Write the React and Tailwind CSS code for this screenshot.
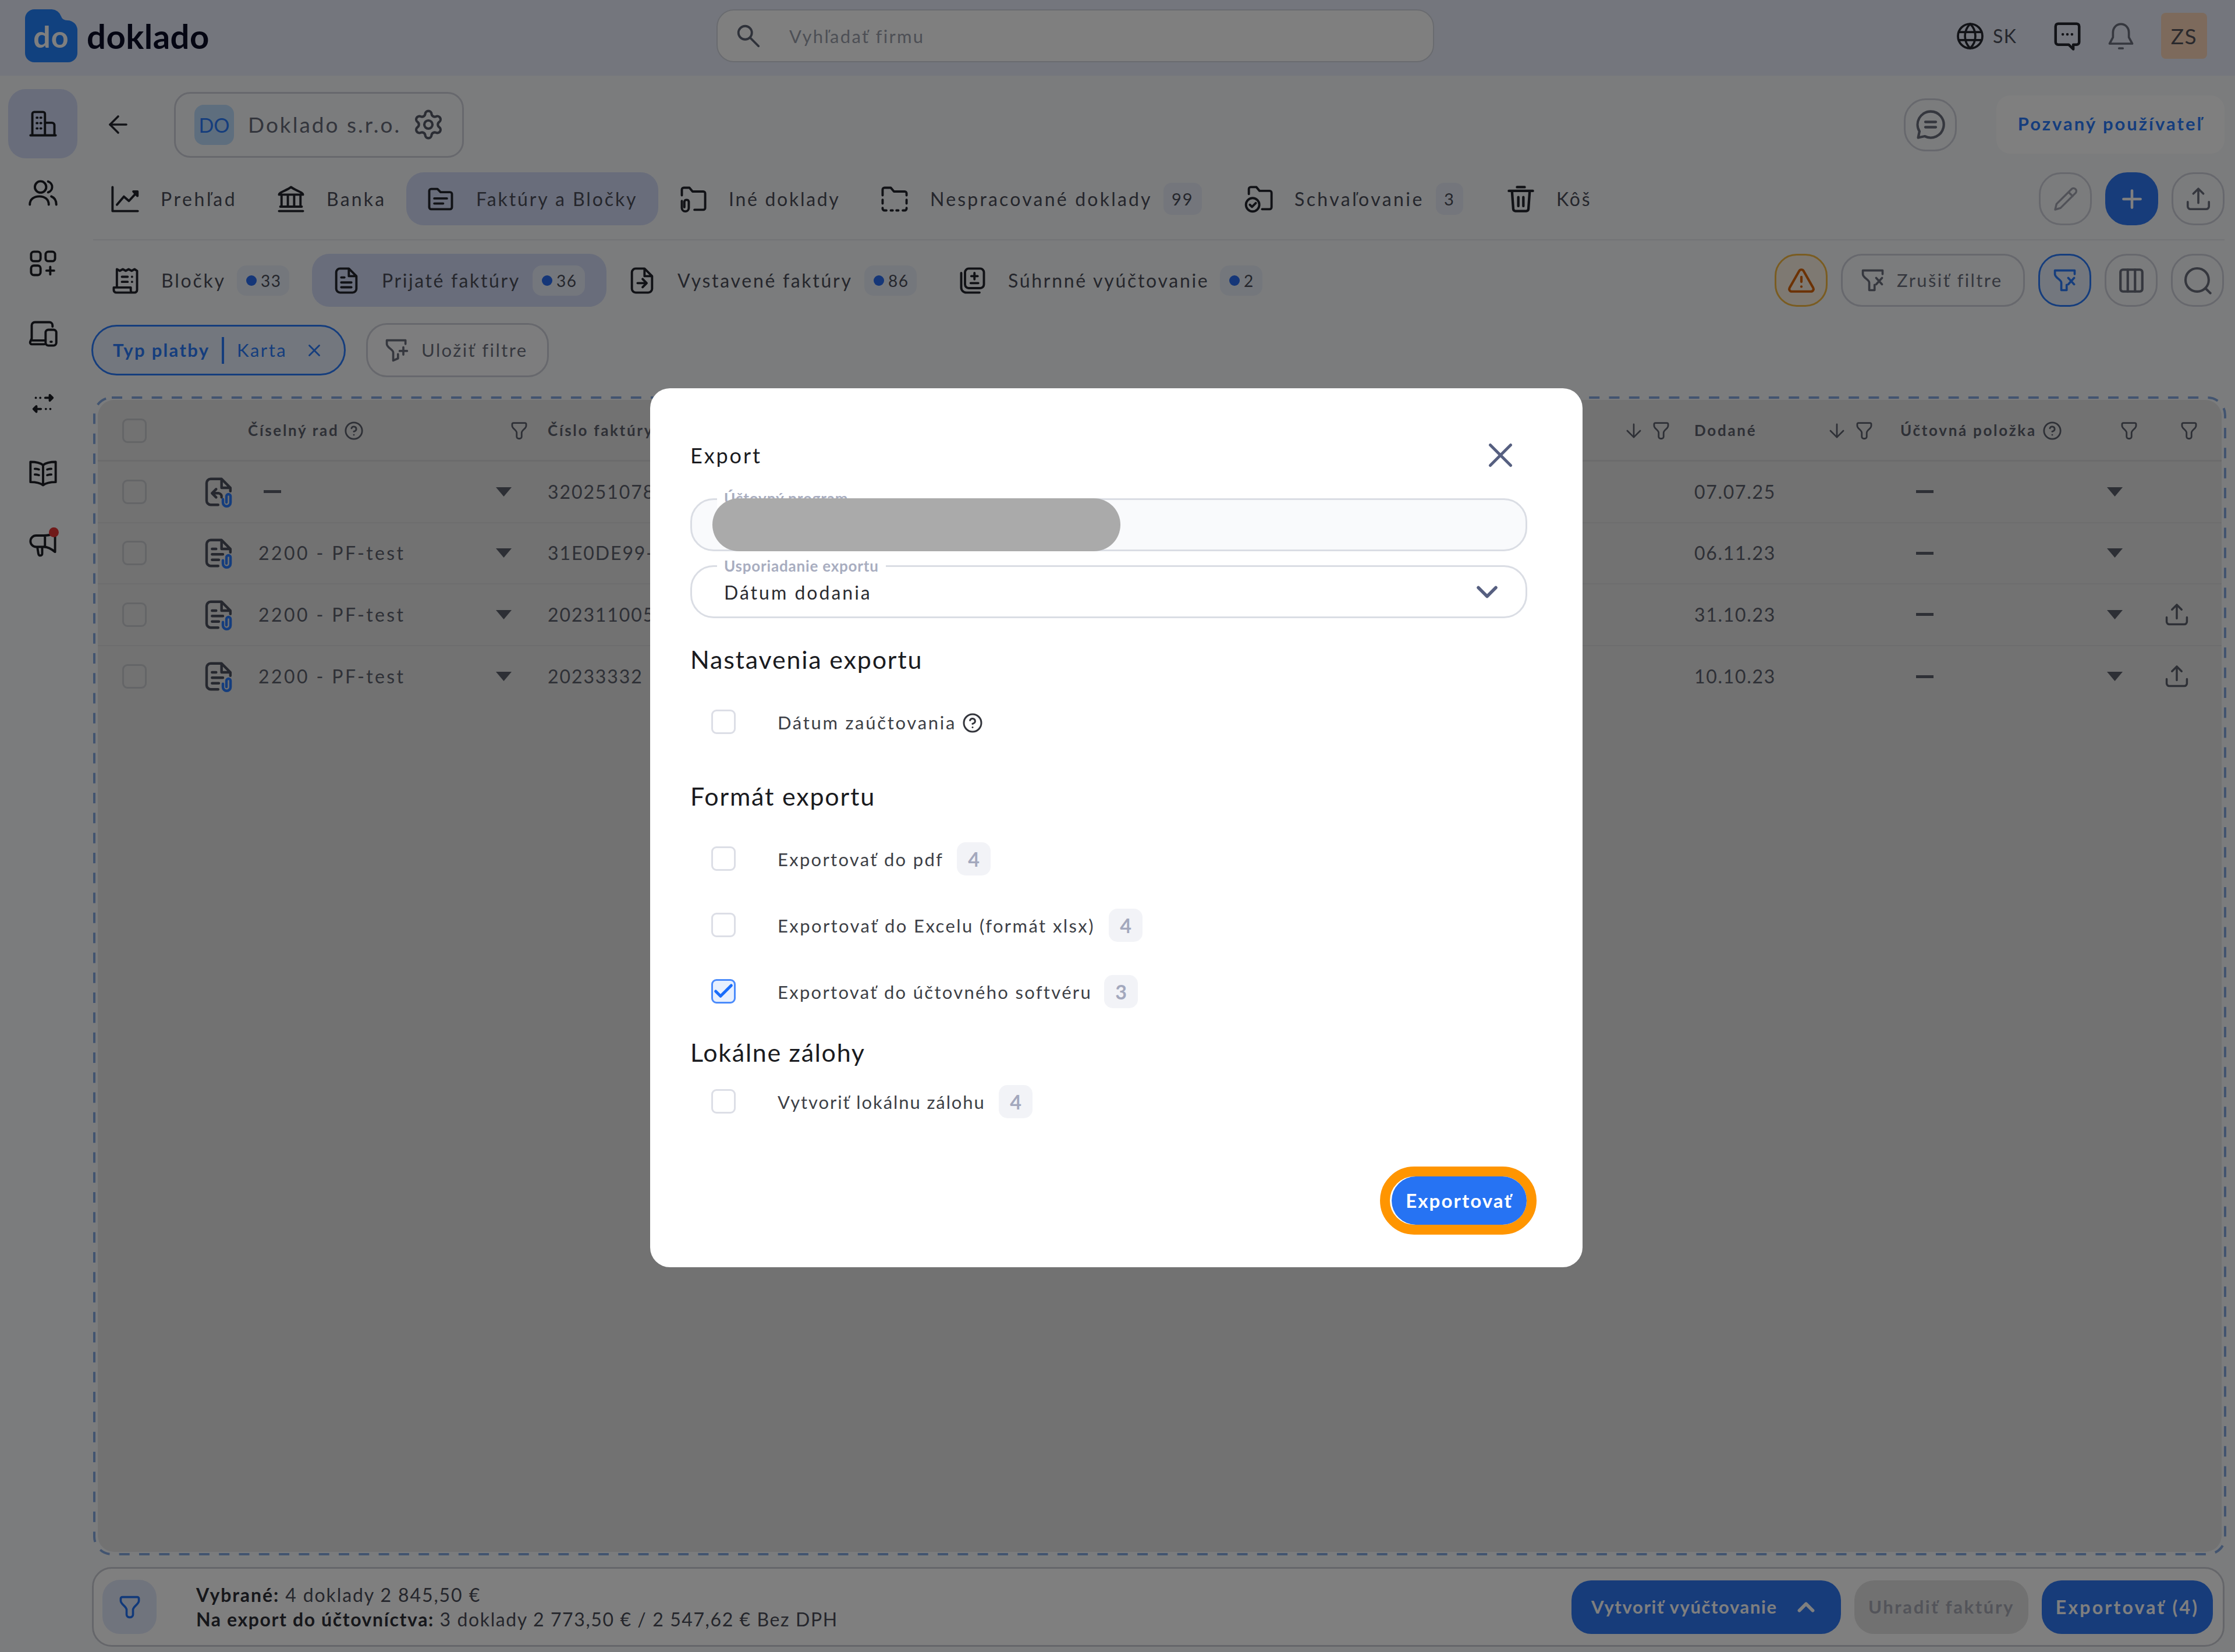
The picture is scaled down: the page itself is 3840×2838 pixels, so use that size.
import React, { useState } from 'react';
import {
  ArrowDown,
  ArrowLeft,
  Check,
  ChevronDown,
  ChevronUp,
  CircleHelp,
  Columns3,
  Plus,
  Settings,
  TriangleAlert,
  X,
} from 'lucide-react';

const Svg = ({ size = 52, sw = 1.8, children, className = '' }) => (
  <svg
    width={size}
    height={size}
    viewBox="0 0 24 24"
    fill="none"
    stroke="currentColor"
    strokeWidth={sw}
    strokeLinecap="round"
    strokeLinejoin="round"
    className={`shrink-0 ${className}`}
  >
    {children}
  </svg>
);

const BuildingIcon = () => (
  <Svg>
    <path d="M2 21h20M3.500 21V4A1.500 1.500 0 0 1 5 2.500h7A1.500 1.500 0 0 1 13.500 4v17M13.500 11h5.500a2 2 0 0 1 2 2v8" />
    <path d="M7 7h.5M10 7h.5M7 11.300h.5M10 11.300h.5M7 15.500h.5M10 15.500h.5" />
  </Svg>
);

const UsersIcon = () => (
  <Svg>
    <circle cx="10" cy="7" r="4.500" />
    <path d="M1.500 21c0-4.500 3.500-6.500 7.500-6.500s7.500 2 7.500 6.500M16 2.700a4.500 4.500 0 0 1 0 8.600M18.500 14.500c2.500 1 4 3.200 4 6.500" />
  </Svg>
);

const AppsIcon = () => (
  <Svg>
    <rect x="2.5" y="2.5" width="7.5" height="7.500" rx="2.200" />
    <rect x="14" y="2.5" width="7.5" height="7.500" rx="2.200" />
    <rect x="2.5" y="13.500" width="7.5" height="7.500" rx="2.200" />
    <path d="M17.700 14.500v6M14.700 17.500h6" />
  </Svg>
);

const DevicesIcon = () => (
  <Svg>
    <path d="M19.500 6.500V5.500A2.500 2.500 0 0 0 17 3H5.500A2.500 2.500 0 0 0 3 5.500V16L1.800 18.500A1.500 1.500 0 0 0 3.200 20.500H13M3 17.500h10.500" />
    <rect x="14" y="9" width="8.500" height="12.500" rx="2.200" />
    <path d="M18 18.500h.8" />
  </Svg>
);

const TransferIcon = () => (
  <Svg size={46} sw={2}>
    <path d="M14 7h6M18 4.500l2.500 2.500-2.500 2.500ZM10 17H4M6 14.500l-2.500 2.500 2.500 2.500Z" />
    <path d="M5.500 7h.01M9.500 7h.01M18.500 17h.01M14.500 17h.01" />
  </Svg>
);

const BookIcon = () => (
  <Svg>
    <path d="M12 5.500C9.500 3.500 6 3 2 3v16c4 0 7.500.5 10 2.500 2.500-2 6-2.500 10-2.500V3c-4 0-7.500.5-10 2.500ZM12 5.500v16" />
    <path d="M5.500 8.500c1.200 0 2.200.2 3.200.5M5.500 13c1.200 0 2.200.2 3.200.5M18.500 8.500c-1.200 0-2.200.2-3.200.5M18.500 13c-1.200 0-2.200.2-3.200.5" />
  </Svg>
);

const MegaphoneIcon = () => (
  <Svg>
    <path d="M21.500 5v14c-3-2.500-6-4-9-4H6.500a4.500 4.500 0 0 1 0-9h6c3 0 5-.3 7-1.500M13.500 6v9M7.500 15.500l.8 5a1.500 1.500 0 0 0 3-.3V15" />
  </Svg>
);

const GlobeIcon = () => (
  <Svg size={52} sw={1.700}>
    <circle cx="12" cy="12" r="9.700" />
    <path d="M3 8.800h18M3 15.200h18M12 2.300c-5.500 5.500-5.500 14 0 19.400 5.500-5.500 5.500-14 0-19.400Z" />
  </Svg>
);

const BellIcon = () => (
  <Svg size={52} sw={1.700}>
    <path d="M12 2.500c-3.800 0-6.300 3-6.300 6.700V13L3 18h18l-2.700-5V9.200c0-3.700-2.500-6.700-6.300-6.700ZM10.500 21.700h3" />
  </Svg>
);

const HeaderSearchIcon = () => (
  <Svg size={46} sw={2}>
    <circle cx="9" cy="9" r="6" />
    <path d="m13.500 13.500 7.500 7.500" />
  </Svg>
);

const SearchIcon = () => (
  <Svg size={52} sw={1.900}>
    <circle cx="11.500" cy="11.500" r="9.200" />
    <path d="m18.200 18.200 3.800 3.800" />
  </Svg>
);

const ChatDotsIcon = ({ size }) => (
  <Svg size={size} sw={2}>
    <path d="M5 2.500h14A2 2 0 0 1 21 4.500v12a2 2 0 0 1-2 2h-2.500V22L13 18.500H5A2 2 0 0 1 3 16.500v-12A2 2 0 0 1 5 2.500ZM8.500 10.700h.01M12 10.700h.01M15.500 10.700h.01" />
  </Svg>
);

const CommentIcon = ({ size }) => (
  <Svg size={size} sw={1.900}>
    <path d="M12 2a10 10 0 1 1-4.500 18.900L2.500 22l1-4.800A10 10 0 0 1 12 2ZM8 10h8M8 14h8" />
  </Svg>
);

const ChartIcon = () => (
  <Svg>
    <path d="M2 2.500v19h20M5.500 16.500l5.500-6.500 4 3.500 6-6.500" />
    <path d="M18.500 6h3.300v3.500Z" fill="currentColor" />
  </Svg>
);

const BankIcon = () => (
  <Svg>
    <path d="M2.500 8.500c0-2 5.500-3 9.500-6 4 3 9.500 4 9.500 6ZM4.500 9v9M9.500 9v9M14.500 9v9M19.500 9v9M3.500 18h17M2.500 21.500h19" />
  </Svg>
);

const FolderIcon = () => (
  <Svg>
    <path d="M3 18V5.500A1.500 1.500 0 0 1 4.500 4h5L12 6.500h7.500A1.500 1.500 0 0 1 21 8v10.500a1.500 1.500 0 0 1-1.500 1.500h-15A1.500 1.500 0 0 1 3 18.500Z" />
    <path d="M7 11.500h10M7 15.500h7" />
  </Svg>
);

const FolderClipIcon = () => (
  <Svg>
    <path d="M3 9V4.500A1.500 1.500 0 0 1 4.500 3h4.500l2.500 3h8.500A1.500 1.500 0 0 1 21.500 7.500V19a1.500 1.500 0 0 1-1.500 1.500h-7" />
    <path d="M3 13.500V19a2.700 2.700 0 0 0 5.500 0v-5a1.800 1.800 0 0 0-3.500 0v4.500" />
  </Svg>
);

const FolderDashedIcon = () => (
  <Svg>
    <path d="M2.500 9V4.500A1.500 1.500 0 0 1 4 3h5l2.500 3h8.500A1.500 1.500 0 0 1 21.500 7.500V9" />
    <path d="M2.500 12.500v3M21.500 12.500v3M2.500 19v.5A1.500 1.500 0 0 0 4 21h1.500M21.500 19v.5A1.500 1.500 0 0 1 20 21h-1.500M9 21h1.500M13.500 21H15" />
  </Svg>
);

const FolderCheckIcon = () => (
  <Svg>
    <path d="M4 8V4a1.500 1.500 0 0 1 1.500-1.500H10l2.500 3h8A1.500 1.500 0 0 1 22 7v11.500a1.500 1.500 0 0 1-1.500 1.500H14.500" />
    <circle cx="7" cy="16.500" r="5.300" />
    <path d="m4.800 16.500 1.700 1.700 3-3" />
  </Svg>
);

const TrashIcon = () => (
  <Svg sw={2}>
    <path d="M2.500 5.500h19M9 2.500h6M5 6l1 14a1.700 1.700 0 0 0 1.700 1.500h8.600A1.700 1.700 0 0 0 18 20l1-14M10 10.500v7M14 10.500v7" />
  </Svg>
);

const ReceiptIcon = () => (
  <Svg>
    <path d="M5 17V3l2.300 1.300L9.700 3 12 4.300 14.300 3l2.400 1.300L19 3l2 1.300V19.500a2 2 0 0 1-2 2H4.500A2 2 0 0 1 2.500 19.500V17.500h13.500V19.500a1.700 1.700 0 0 0 2 2" />
    <path d="M9 9h4.500M9 13h4.500M17 9h.01M17 13h.01" />
  </Svg>
);

const DocIcon = () => (
  <Svg>
    <path d="M14 2.500H7A3 3 0 0 0 4 5.500v13a3 3 0 0 0 3 3h10a3 3 0 0 0 3-3V8.500ZM14 2.500V8.500h6M8 9.500h2.500M8 13.500h8M8 17.300h8" />
  </Svg>
);

const DocArrowIcon = () => (
  <Svg>
    <path d="M14 2.500H7A3 3 0 0 0 4 5.500v13a3 3 0 0 0 3 3h10a3 3 0 0 0 3-3V8.500ZM14 2.500V8.500h6M8.500 14h7M12.500 10.800l3.200 3.200-3.200 3.200" />
  </Svg>
);

const DocsSumIcon = () => (
  <Svg>
    <rect x="6" y="2.500" width="15" height="15.500" rx="3" />
    <path d="M3 6v11.500A4 4 0 0 0 7 21.500h10.500M13.500 6v5M11 8.500h5M10.500 14h6" />
  </Svg>
);

const PencilIcon = () => (
  <Svg size={48} sw={1.700}>
    <path d="m3 21 1.200-4.800L17 3.500a2.300 2.300 0 0 1 3.500 3.300L7.600 19.700ZM14.500 6l3.500 3.500" />
  </Svg>
);

const UploadIcon = ({ size = 48 }) => (
  <Svg size={size} sw={1.900}>
    <path d="M12 15.500V2.800M7.500 7.200 12 2.700l4.500 4.500M2.500 14.500v4A2.500 2.500 0 0 0 5 21h14a2.500 2.500 0 0 0 2.500-2.500v-4" />
  </Svg>
);

const FunnelIcon = ({ size = 34, sw = 2 }) => (
  <Svg size={size} sw={sw}>
    <path d="M5 2.500h14A1.500 1.500 0 0 1 20.500 4v2c0 3.500-5.500 5-5.500 8.500V19a2.500 2.500 0 0 1-2.500 2.500h-1A2.500 2.500 0 0 1 9 19v-4.500C9 11 3.500 9.500 3.500 6V4A1.500 1.500 0 0 1 5 2.500Z" />
  </Svg>
);

const FunnelXIcon = () => (
  <Svg size={44} sw={2}>
    <path d="M21 6V2.500H2.500V6c0 3.500 6 5 6 8v7h5v-5" />
    <path d="m15 9.500 5.500 6M20.500 9.500l-5.500 6" />
  </Svg>
);

const FunnelPlusIcon = () => (
  <Svg size={44} sw={2}>
    <path d="M20 6V2.500H2.500V6c0 3.500 6 5 6 8v7.500l4.500-2v-4" />
    <path d="M18 9v7M14.500 12.500h7" />
  </Svg>
);

const FileClipIcon = ({ returned }) => (
  <Svg size={56} sw={1.900} className="-ml-1">
    <path d="M11.500 21.500H6a3 3 0 0 1-3-3v-13a3 3 0 0 1 3-3h8L20.500 9v2.500M14 3v6h6" />
    {returned ? (
      <path d="M10 10 7 13l3 3M7 13h5a2.500 2.500 0 0 1 2 3" />
    ) : (
      <path d="M7 9h3M7 13h8M7 17h5" />
    )}
    <path d="M15 17.500v2.300a2.800 2.800 0 0 0 5.600 0V15.200a1.500 1.500 0 0 0-3 0v4.500" stroke="#2a7bfa" />
  </Svg>
);

const Triangle = () => (
  <svg width="27" height="16" viewBox="0 0 27 16" className="shrink-0 text-[#5a5e6a]">
    <path d="M0 0h27L13.500 16Z" fill="currentColor" />
  </svg>
);

const mainTabs = [
  { label: 'Prehľad', icon: <ChartIcon />, box: 'w-[286px] pl-[35px]', text: 'w-[127px] tracking-[3.6px]' },
  { label: 'Banka', icon: <BankIcon />, box: 'w-[258px] pl-[34px]', text: 'w-[100px] tracking-[3.2px]' },
  { label: 'Faktúry a Bločky', icon: <FolderIcon />, box: 'w-[433px] pl-[33px]', text: 'w-[277px] tracking-[2.9px]', active: true },
  { label: 'Iné doklady', icon: <FolderClipIcon />, box: 'w-[347px] pl-[34px]', text: 'w-[190px] tracking-[2.7px]' },
  { label: 'Nespracované doklady', icon: <FolderDashedIcon />, box: 'w-[623px] pl-[33px]', text: 'w-[379px] tracking-[3.2px]', count: 99 },
  { label: 'Schvaľovanie', icon: <FolderCheckIcon />, box: 'w-[451px] pl-[36px]', text: 'w-[221px] tracking-[3.4px]', count: 3 },
  { label: 'Kôš', icon: <TrashIcon />, box: 'w-[216px] pl-[35px]', text: 'tracking-[2.8px]' },
];

const subTabs = [
  { label: 'Bločky', icon: <ReceiptIcon />, box: 'w-[382px] pl-[36px]', text: 'w-[110px] tracking-[2.8px]', count: 33 },
  { label: 'Prijaté faktúry', icon: <DocIcon />, box: 'w-[506px] pl-[33px]', text: 'w-[239px] tracking-[2.6px]', count: 36, active: true },
  { label: 'Vystavené faktúry', icon: <DocArrowIcon />, box: 'w-[568px] pl-[35px]', text: 'w-[301px] tracking-[2.7px]', count: 86 },
  { label: 'Súhrnné vyúčtovanie', icon: <DocsSumIcon />, box: 'w-[590px] pl-[35px]', text: 'w-[344px] tracking-[2.7px]', count: 2 },
];

const rows = [
  { series: null, number: '320251078', date: '07.07.25', returned: true },
  { series: '2200 - PF-test', number: '31E0DE99-', date: '06.11.23' },
  { series: '2200 - PF-test', number: '202311005', date: '31.10.23', upload: true },
  { series: '2200 - PF-test', number: '20233332', date: '10.10.23', upload: true },
];

const Logo = () => (
  <div className="flex items-center gap-4">
    <div className="relative w-[90px] h-[91px]">
      <svg width="90" height="91" viewBox="0 0 90 91">
        <path
          d="M16 0H46A18 18 0 0 1 62 12Q64 19 73 19A17 17 0 0 1 90 37V75A16 16 0 0 1 74 91H16A16 16 0 0 1 0 75V16A16 16 0 0 1 16 0Z"
          fill="#2382ff"
        />
      </svg>
      <span className="absolute inset-x-0 top-[16px] text-center text-[52px] leading-[60px] font-bold tracking-[1px] text-white">do</span>
    </div>
    <span className="text-[58px] leading-[60px] font-bold tracking-[0.5px] text-[#0b0d26]">doklado</span>
  </div>
);

const Header = () => (
  <header className="h-[130px] shrink-0 bg-[#e8edfb] flex items-center pl-[43px] pr-[48px] pb-[7px]">
    <div className="w-[1188px]">
      <Logo />
    </div>
    <div className="w-[1233px] h-[91px] rounded-[30px] border-2 border-[#d3d6df] bg-white flex items-center pl-[30px] text-[#5f6474]">
      <HeaderSearchIcon />
      <span className="ml-[47px] pt-[2px] text-[31px] tracking-[2.3px] text-[#9a9eab]">Vyhľadať firmu</span>
    </div>
    <div className="ml-auto flex items-center text-[#24262e]">
      <GlobeIcon />
      <span className="ml-[13px] w-[44px] text-[32px] tracking-[1.5px] text-[#4a4d58]">SK</span>
      <span className="ml-[57px]">
        <ChatDotsIcon size={54} />
      </span>
      <span className="ml-[39px] text-[#6a6e7d]">
        <BellIcon />
      </span>
      <span className="ml-[43px] w-[79px] h-[79px] rounded-lg bg-[#fbd5b8] flex items-center justify-center text-[37px] tracking-[1.5px] text-[#54525a]">ZS</span>
    </div>
  </header>
);

const Sidebar = () => (
  <aside className="w-[154px] shrink-0 pt-[23px] pl-[14px] text-[#1c1e25]">
    <div className="w-[119px] flex flex-col items-center">
      <div className="w-full h-[119px] rounded-[30px] bg-[#d2dbf6] flex items-center justify-center"><BuildingIcon /></div>
      <div className="h-[120px] flex items-center"><UsersIcon /></div>
      <div className="h-[121px] flex items-center"><AppsIcon /></div>
      <div className="h-[120px] flex items-center"><DevicesIcon /></div>
      <div className="h-[120px] flex items-center"><TransferIcon /></div>
      <div className="h-[120px] flex items-center"><BookIcon /></div>
      <div className="h-[120px] flex items-center relative">
        <MegaphoneIcon />
        <span className="absolute top-[33px] -right-[1px] w-[17px] h-[17px] rounded-full bg-[#e03434]" />
      </div>
    </div>
  </aside>
);

const RoundButton = ({ children, tone = 'border-[#cfd1da] text-[#6b6f7d]' }) => (
  <button type="button" className={`w-[91px] h-[91px] shrink-0 rounded-[38px] border-[3px] flex items-center justify-center ${tone}`}>
    {children}
  </button>
);

const CompanyBar = () => (
  <div className="h-[114px] flex items-center">
    <span className="ml-[25px] w-[120px] text-[#24262e]">
      <ArrowLeft size={48} strokeWidth={1.8} />
    </span>
    <div className="w-[498px] h-[113px] rounded-[28px] border-[3px] border-[#cfd1da] flex items-center pl-[32px]">
      <span className="w-[68px] h-[69px] rounded-[16px] bg-[#bcdcfc] text-[#2a7bfa] text-[34px] flex items-center justify-center">DO</span>
      <span className="ml-[24px] w-[282px] text-[37px] tracking-[3px] text-[#666a78] whitespace-nowrap">Doklado s.r.o.</span>
      <Settings size={56} strokeWidth={1.8} className="text-[#565a68]" />
    </div>
    <div className="ml-auto mr-[18px] flex items-center gap-[68px]">
      <RoundButton>
        <CommentIcon size={54} />
      </RoundButton>
      <button type="button" className="w-[392px] h-[100px] rounded-[24px] bg-white pb-[3px] text-[31px] font-bold tracking-[3px] text-[#2a7bfa] whitespace-nowrap">
        Pozvaný používateľ
      </button>
    </div>
  </div>
);

const Tab = ({ tab, dot }) => (
  <button
    type="button"
    className={`h-[91px] shrink-0 flex items-center text-[32px] text-left whitespace-nowrap text-[#4a4d58] ${tab.box} ${
      tab.active ? 'rounded-[30px] bg-[#d2dbf6]' : ''
    }`}
  >
    <span className="text-[#22242c]">{tab.icon}</span>
    <span className={`ml-[35px] ${tab.text}`}>{tab.label}</span>
    {tab.count && !dot && (
      <span className="ml-[22px] h-[55px] px-[14px] rounded-[14px] bg-[#e9edf8] flex items-center text-[29px] tracking-[2px]">{tab.count}</span>
    )}
    {tab.count && dot && (
      <span className={`ml-[20px] h-[52px] pl-[16px] pr-[14px] rounded-[16px] flex items-center gap-[7px] text-[28px] tracking-[1.5px] ${tab.active ? 'bg-[#e9eefb]' : 'bg-[#e9eff9]'}`}>
        <span className="w-[18px] h-[18px] rounded-full bg-[#2a6df0]" />
        {tab.count}
      </span>
    )}
  </button>
);

const FilterChips = () => (
  <div className="ml-[3px] mt-[28px] h-[93px] flex items-center gap-[35px] text-[31px]">
    <div className="w-[437px] h-[87px] rounded-full border-[3px] border-[#2a7bfa] bg-[#e6effc] text-[#2a7bfa] flex items-center pl-[34px]">
      <span className="w-[187px] font-bold tracking-[2.3px] whitespace-nowrap">Typ platby</span>
      <span className="w-[4px] h-[46px] bg-[#2a7bfa]" />
      <span className="ml-[22px] w-[116px] tracking-[2.5px]">Karta</span>
      <X size={34} strokeWidth={2} />
    </div>
    <div className="w-[314px] h-[93px] rounded-[36px] border-[3px] border-[#cfd1da] bg-[#fbfbfc] text-[#6b6f7d] flex items-center pl-[28px]">
      <FunnelPlusIcon />
      <span className="ml-[20px] tracking-[2.4px] whitespace-nowrap">Uložiť filtre</span>
    </div>
  </div>
);

const Box = ({ checked, dim }) => (
  <span
    className={`w-[42px] h-[42px] shrink-0 rounded-[9px] border-[3px] flex items-center justify-center ${
      checked ? 'border-[#4b8bfb] bg-[#e8f0fe] text-[#1a6dfb]' : dim ? 'border-[#c8cacf]' : 'border-[#dcdee6] bg-white'
    }`}
  >
    {checked && <Check size={40} strokeWidth={3} className="shrink-0" />}
  </span>
);

const InvoiceTable = () => (
  <div className="relative ml-[6px] mt-[33px] w-[3665px] h-[1991px] p-[6px] pl-[8px]">
    <svg width="3665" height="1991" className="absolute inset-0">
      <rect x="2" y="2" width="3661" height="1987" rx="30" fill="none" stroke="#84a9e0" strokeWidth="4" strokeDasharray="18 16.3" />
    </svg>
    <div className="w-[3649px] h-full rounded-[28px] bg-[#e4e4e4] text-[#5c606d] whitespace-nowrap overflow-hidden">
      <div className="h-[106px] border-b-[3px] border-[#d6d6d9] flex items-center pt-[2px] text-[26px] font-bold tracking-[2.7px]">
        <span className="w-[258px] pl-[42px]"><Box dim /></span>
        <span className="w-[449px] flex items-center gap-[9px]">
          <span className="w-[156px]">Číselný rad</span>
          <CircleHelp size={34} strokeWidth={2} />
        </span>
        <span className="w-[66px]"><FunnelIcon /></span>
        <span className="w-[1847px]">Číslo faktúry</span>
        <span className="w-[49px]"><ArrowDown size={38} strokeWidth={1.7} /></span>
        <span className="w-[74px]"><FunnelIcon /></span>
        <span className="w-[226px]">Dodané</span>
        <span className="w-[49px]"><ArrowDown size={38} strokeWidth={1.7} /></span>
        <span className="w-[79px]"><FunnelIcon /></span>
        <span className="w-[376px] flex items-center gap-[8px]">
          <span className="w-[236px]">Účtovná položka</span>
          <CircleHelp size={34} strokeWidth={2} />
        </span>
        <span className="w-[103px]"><FunnelIcon /></span>
        <FunnelIcon />
      </div>
      {rows.map((row, i) => (
        <div
          key={row.number}
          className={`h-[105.5px] flex items-center text-[32px] tracking-[1.9px] ${i < rows.length - 1 ? 'border-b-2 border-[#dadadc]' : ''}`}
        >
          <span className="w-[184px] pl-[42px]"><Box dim /></span>
          <span className="w-[92px] text-[#4c505e]"><FileClipIcon returned={row.returned} /></span>
          <span className="w-[408px] tracking-[3.4px]">
            {row.series ? row.series : <span className="block ml-[9px] w-[30px] h-[5px] bg-[#5c606d]" />}
          </span>
          <span className="w-[89px]"><Triangle /></span>
          <span className="w-[1970px]">{row.number}</span>
          <span className="w-[381px] tracking-[1.7px]">{row.date}</span>
          <span className="w-[328px]"><span className="block w-[30px] h-[5px] bg-[#5c606d]" /></span>
          <span className="w-[98px]"><Triangle /></span>
          {row.upload && <UploadIcon size={44} />}
        </div>
      ))}
    </div>
  </div>
);

const SummaryBar = () => (
  <div className="ml-[4px] mt-[20px] w-[3664px] h-[137px] rounded-[34px] border-[3px] border-[#cbcdd4] bg-white flex items-center pl-[15px] pr-[17px] text-[32px]">
    <span className="w-[93px] h-[93px] rounded-[30px] bg-[#e1e8fb] text-[#2373f5] flex items-center justify-center">
      <FunnelIcon size={44} />
    </span>
    <div className="ml-[68px] leading-[42px] tracking-[1.6px] text-[#4a4d58]">
      <p className="tracking-[1.9px]"><b className="text-[#2c2e36]">Vybrané:</b> 4 doklady 2 845,50 €</p>
      <p><b className="text-[#2c2e36]">Na export do účtovníctva:</b> 3 doklady 2 773,50 € / 2 547,62 € Bez DPH</p>
    </div>
    <div className="ml-auto flex gap-[23px] font-bold whitespace-nowrap text-[31px]">
      <button type="button" className="w-[463px] h-[92px] rounded-[34px] bg-[#2f78f5] text-white flex items-center pl-[34px]">
        <span className="w-[346px] text-left tracking-[1.6px]">Vytvoriť vyúčtovanie</span>
        <ChevronUp size={46} strokeWidth={3} />
      </button>
      <button type="button" className="w-[299px] h-[92px] rounded-[34px] bg-[#e2e2e2] text-[#a6a9b4] tracking-[2.6px]">Uhradiť faktúry</button>
      <button type="button" className="w-[294px] h-[92px] rounded-[34px] bg-[#2f78f5] text-white text-[32px] tracking-[3.2px]">Exportovať (4)</button>
    </div>
  </div>
);

const Option = ({ label, text, count, checked, help, onClick, height = 'h-[114px]' }) => (
  <div className={`flex items-center pl-[36px] ${height}`} onClick={onClick}>
    <Box checked={checked} />
    <span className={`ml-[72px] pt-[2px] text-[31px] text-[#3d3f46] whitespace-nowrap ${text}`}>{label}</span>
    {help && <CircleHelp size={36} strokeWidth={2} className="ml-[11px] mt-[3px] text-[#33353c]" />}
    {count && (
      <span className="ml-[22px] w-[58px] h-[57px] rounded-[15px] bg-[#f2f3f7] text-[#a3a8bd] text-[34px] font-bold flex items-center justify-center">
        {count}
      </span>
    )}
  </div>
);

const ExportModal = () => {
  const [selected, setSelected] = useState({ software: true });

  const toggle = (key) => setSelected({ ...selected, [key]: !selected[key] });

  return (
    <div className="absolute left-[1117px] top-[667px] w-[1602px] h-[1510px] rounded-[34px] bg-white pl-[69px] pr-[79px] text-[#1a1b1f]">
      <div className="mt-[70px] h-[90px] flex items-center justify-between">
        <h2 className="text-[36px] tracking-[2.9px]">Export</h2>
        <X size={70} strokeWidth={1.7} className="mr-[27px] text-[#565f80]" />
      </div>
      <div className="relative mt-[29px] w-[1438px] h-[91px] rounded-[40px] border-[3px] border-[#dadde4] bg-[#f9fafc]">
        <span className="absolute left-[43px] -top-[19px] w-[235px] pl-[12px] bg-white text-[26px] leading-[32px] font-bold tracking-[0.9px] text-[#a8adc0] whitespace-nowrap">
          Účtovný program
        </span>
        <span className="absolute left-[35px] -top-[3px] w-[701px] h-[91px] rounded-full bg-[#aaaaaa]" />
      </div>
      <div className="relative mt-[24px] w-[1438px] h-[91px] rounded-[40px] border-[3px] border-[#dadde4] flex items-center pl-[55px] pr-[36px]">
        <span className="absolute left-[43px] -top-[18px] w-[290px] pl-[12px] bg-white text-[26px] leading-[32px] font-bold tracking-[0.8px] text-[#a8adc0] whitespace-nowrap">
          Usporiadanie exportu
        </span>
        <span className="pt-[2px] text-[32px] tracking-[3px] text-[#2a2b30]">Dátum dodania</span>
        <ChevronDown size={60} strokeWidth={2.2} className="ml-auto text-[#565f80]" />
      </div>

      <h3 className="mt-[41px] h-[60px] text-[43px] leading-[60px] tracking-[1.8px]">Nastavenia exportu</h3>
      <div className="mt-[20px]">
        <Option label="Dátum zaúčtovania" text="w-[306px] tracking-[2.7px]" help checked={selected.date} onClick={() => toggle('date')} />
      </div>

      <h3 className="mt-[41px] h-[60px] text-[43px] leading-[60px] tracking-[1.8px]">Formát exportu</h3>
      <div className="mt-[20px]">
        <Option label="Exportovať do pdf" text="w-[286px] tracking-[2.3px]" count={4} checked={selected.pdf} onClick={() => toggle('pdf')} />
        <Option label="Exportovať do Excelu (formát xlsx)" text="w-[547px] tracking-[2.4px]" count={4} checked={selected.excel} onClick={() => toggle('excel')} />
        <Option label="Exportovať do účtovného softvéru" text="w-[539px] tracking-[2.3px]" count={3} checked={selected.software} onClick={() => toggle('software')} />
      </div>

      <h3 className="mt-[18px] h-[60px] text-[43px] leading-[60px] tracking-[1.7px]">Lokálne zálohy</h3>
      <Option label="Vytvoriť lokálnu zálohu" text="w-[358px] tracking-[1.9px]" count={4} height="h-[108px]" checked={selected.backup} onClick={() => toggle('backup')} />

      <div className="mt-[58px] flex justify-end">
        <div className="w-[269px] h-[117px] rounded-full border-[17px] border-[#ff9500] bg-white pl-[3px]">
          <button
            type="button"
            className="w-full h-full rounded-full bg-[#2673f3] text-white text-[33px] font-bold tracking-[2.1px] flex items-center justify-center"
          >
            Exportovať
          </button>
        </div>
      </div>
    </div>
  );
};

const App = () => (
  <div className="relative w-[3840px] h-[2838px] overflow-hidden bg-[#f6f8fb] flex flex-col font-['Lato','Noto_Sans',sans-serif]">
    <Header />
    <div className="flex flex-1">
      <Sidebar />
      <main className="flex-1 pt-[27px]">
        <CompanyBar />
        <div className="mt-[25px] h-[91px] flex items-center">
          {mainTabs.map((tab) => (
            <Tab key={tab.label} tab={tab} />
          ))}
          <div className="ml-auto mr-[18px] flex gap-[23px]">
            <RoundButton tone="border-[#cfd1da] text-[#a2a5b0]"><PencilIcon /></RoundButton>
            <RoundButton tone="border-[#2f78f5] bg-[#2f78f5] text-white"><Plus size={50} strokeWidth={2.2} /></RoundButton>
            <RoundButton><UploadIcon size={46} /></RoundButton>
          </div>
        </div>
        <div className="ml-[6px] mr-[18px] mt-[24px] h-[2px] bg-[#e4e6eb]" />
        <div className="mt-[23px] h-[91px] flex items-center">
          {subTabs.map((tab) => (
            <Tab key={tab.label} tab={tab} dot />
          ))}
          <div className="ml-auto mr-[19px] flex gap-[23px]">
            <RoundButton tone="border-[#f5b942] bg-[#fdf3e4] text-[#d9650b]"><TriangleAlert size={50} strokeWidth={2} /></RoundButton>
            <div className="w-[316px] h-[91px] rounded-[36px] border-[3px] border-[#cfd1da] text-[#6b6f7d] flex items-center pl-[30px] text-[31px]">
              <FunnelXIcon />
              <span className="ml-[19px] tracking-[2.4px] whitespace-nowrap">Zrušiť filtre</span>
            </div>
            <RoundButton tone="border-[#2a7bfa] bg-[#e6effc] text-[#2a7bfa]"><FunnelXIcon /></RoundButton>
            <RoundButton><Columns3 size={50} strokeWidth={2} /></RoundButton>
            <RoundButton><SearchIcon /></RoundButton>
          </div>
        </div>
        <FilterChips />
        <InvoiceTable />
        <SummaryBar />
      </main>
    </div>
    <div className="absolute inset-0 bg-black/50" />
    <ExportModal />
  </div>
);

export default App;
